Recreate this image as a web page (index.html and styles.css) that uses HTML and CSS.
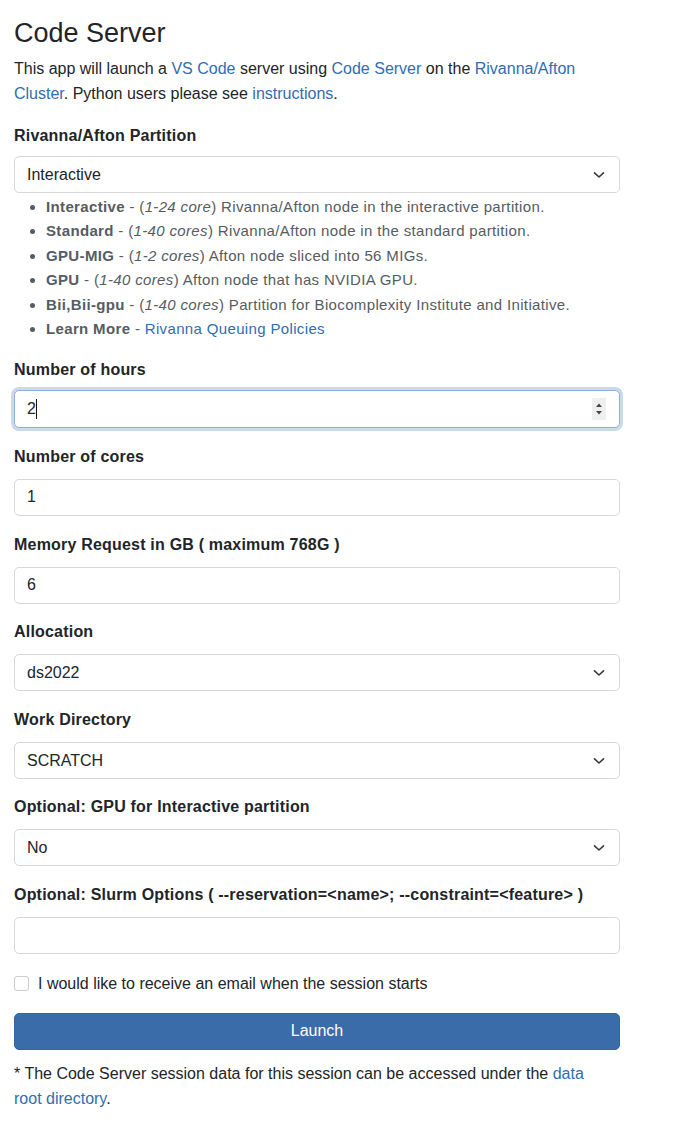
FILE: index.html
```html
<!DOCTYPE html>
<html lang="en">
<head>
<meta charset="UTF-8">
<title>Code Server</title>
<meta name="viewport" content="width=device-width, initial-scale=1">
<link rel="stylesheet" href="styles.css">
</head>
<body>
  <div class="container">
    <h3>Code Server</h3>
    <p class="intro">
      This app will launch a <a href="#">VS Code</a> server using <a href="#">Code Server</a> on the <a href="#">Rivanna/Afton Cluster</a>. Python users please see <a href="#">instructions</a>.
    </p>

    <form>
      <!-- Partition -->
      <div class="form-group">
        <label for="partition" class="tight">Rivanna/Afton Partition</label>
        <div class="select-wrap">
          <select id="partition" class="form-control">
            <option>Interactive</option>
            <option>Standard</option>
            <option>GPU-MIG</option>
            <option>GPU</option>
            <option>Bii</option>
          </select>
          <svg class="chevron" width="12" height="8" viewBox="0 0 12 8"><path d="M1.5 1.8 L6 6 L10.5 1.8" fill="none" stroke="#343a40" stroke-width="1.6" stroke-linecap="round" stroke-linejoin="round"/></svg>
        </div>
        <ul class="help">
          <li><b>Interactive</b> - (<i>1-24 core</i>) Rivanna/Afton node in the interactive partition.</li>
          <li><b>Standard</b> - (<i>1-40 cores</i>) Rivanna/Afton node in the standard partition.</li>
          <li><b>GPU-MIG</b> - (<i>1-2 cores</i>) Afton node sliced into 56 MIGs.</li>
          <li><b>GPU</b> - (<i>1-40 cores</i>) Afton node that has NVIDIA GPU.</li>
          <li><b>Bii,Bii-gpu</b> - (<i>1-40 cores</i>) Partition for Biocomplexity Institute and Initiative.</li>
          <li><b>Learn More</b> - <a href="#">Rivanna Queuing Policies</a></li>
        </ul>
      </div>

      <div class="form-group">
        <label for="hours" class="tight">Number of hours</label>
        <div class="number-wrap">
          <input type="text" id="hours" class="form-control focused" value="2">
          <span class="caret"></span>
          <svg class="spinner" width="14" height="22" viewBox="0 0 14 22"><rect width="14" height="22" fill="#efefef"/><path d="M4 9 L7 5.5 L10 9 Z M4 13 L7 16.5 L10 13 Z" fill="#444"/></svg>
        </div>
      </div>

      <div class="form-group">
        <label for="cores">Number of cores</label>
        <input type="text" id="cores" class="form-control" value="1">
      </div>

      <div class="form-group">
        <label for="memory">Memory Request in GB ( maximum 768G )</label>
        <input type="text" id="memory" class="form-control" value="6">
      </div>

      <div class="form-group">
        <label for="allocation">Allocation</label>
        <div class="select-wrap">
          <select id="allocation" class="form-control">
            <option>ds2022</option>
          </select>
          <svg class="chevron" width="12" height="8" viewBox="0 0 12 8"><path d="M1.5 1.8 L6 6 L10.5 1.8" fill="none" stroke="#343a40" stroke-width="1.6" stroke-linecap="round" stroke-linejoin="round"/></svg>
        </div>
      </div>

      <div class="form-group">
        <label for="workdir">Work Directory</label>
        <div class="select-wrap">
          <select id="workdir" class="form-control">
            <option>SCRATCH</option>
            <option>HOME</option>
          </select>
          <svg class="chevron" width="12" height="8" viewBox="0 0 12 8"><path d="M1.5 1.8 L6 6 L10.5 1.8" fill="none" stroke="#343a40" stroke-width="1.6" stroke-linecap="round" stroke-linejoin="round"/></svg>
        </div>
      </div>

      <div class="form-group">
        <label for="gpu">Optional: GPU for Interactive partition</label>
        <div class="select-wrap">
          <select id="gpu" class="form-control">
            <option>No</option>
            <option>Yes</option>
          </select>
          <svg class="chevron" width="12" height="8" viewBox="0 0 12 8"><path d="M1.5 1.8 L6 6 L10.5 1.8" fill="none" stroke="#343a40" stroke-width="1.6" stroke-linecap="round" stroke-linejoin="round"/></svg>
        </div>
      </div>

      <div class="form-group">
        <label for="slurm">Optional: Slurm Options ( --reservation=&lt;name&gt;; --constraint=&lt;feature&gt; )</label>
        <input type="text" id="slurm" class="form-control">
      </div>

      <div class="form-check">
        <input type="checkbox" id="email">
        <label for="email">I would like to receive an email when the session starts</label>
      </div>

      <button type="button" class="btn-launch">Launch</button>
    </form>

    <p class="note">
      * The Code Server session data for this session can be accessed under the <a href="#">data root directory</a>.
    </p>
  </div>
</body>
</html>
```

FILE: styles.css
```css
/* Base */
:root {
  --text: #212529;
  --muted: #565c62;
  --link: #2f6db3;
  --border: #d6d9dc;
  --primary: #3a6ca9;
}

* { box-sizing: border-box; }
body {
  margin: 0;
  font-family: "Liberation Sans", Arial, sans-serif;
  font-size: 16px;
  line-height: 1.5;
  color: var(--text);
  background: #fff;
}
a { color: var(--link); text-decoration: none; }

.container {
  width: 634px;
  padding: 17px 14px 20px;
}

h3 {
  margin: 0 0 5px;
  font-size: 27px;
  font-weight: 500;
  line-height: 1.25;
}
.intro { margin: 0 0 18px; line-height: 25px; }

/* Form */
.form-group { margin-bottom: 16.6px; }
.form-group > label {
  display: block;
  font-weight: 700;
  letter-spacing: 0.2px;
  margin-bottom: 10px;
}
.form-group > label.tight { margin-bottom: 8px; }
.form-control {
  display: block;
  width: 100%;
  height: 37px;
  padding: 6px 12px;
  font: inherit;
  color: var(--text);
  background: #fff;
  border: 1px solid var(--border);
  border-radius: 5px;
  outline: none;
}
.form-control.focused {
  height: 38px;
  border-color: #8fb1d9;
  box-shadow: 0 0 0 3px #cbd9ea;
}

select.form-control {
  -webkit-appearance: none;
  appearance: none;
  padding-right: 32px;
}
.select-wrap,
.number-wrap { position: relative; }
.chevron {
  position: absolute;
  right: 15px;
  top: 15px;
  pointer-events: none;
}
.spinner {
  position: absolute;
  right: 14px;
  top: 8px;
}
.caret {
  position: absolute;
  left: 22px;
  top: 9px;
  width: 1px;
  height: 20px;
  background: #111;
}

/* Partition help list */
.help {
  margin: 2px 0 1px;
  padding-left: 32px;
  font-size: 15px;
  letter-spacing: 0.35px;
  line-height: 24.5px;
  color: var(--muted);
}
.help b { font-weight: 700; }

/* Checkbox */
.form-check {
  display: flex;
  align-items: center;
  gap: 9px;
  margin: 18px 0 17px;
}
.form-check input {
  -webkit-appearance: none;
  appearance: none;
  width: 15px;
  height: 15px;
  margin: 0;
  border: 1px solid #c9ccd0;
  border-radius: 3px;
  background: #fff;
}
.form-check label { font-weight: 400; }

/* Button */
.btn-launch {
  display: block;
  width: 100%;
  height: 37px;
  font: inherit;
  color: #fff;
  background: var(--primary);
  border: 1px solid #35649f;
  border-radius: 5px;
  cursor: pointer;
}

.note { margin: 11px 0 0; padding-right: 10px; line-height: 25px; }
```
